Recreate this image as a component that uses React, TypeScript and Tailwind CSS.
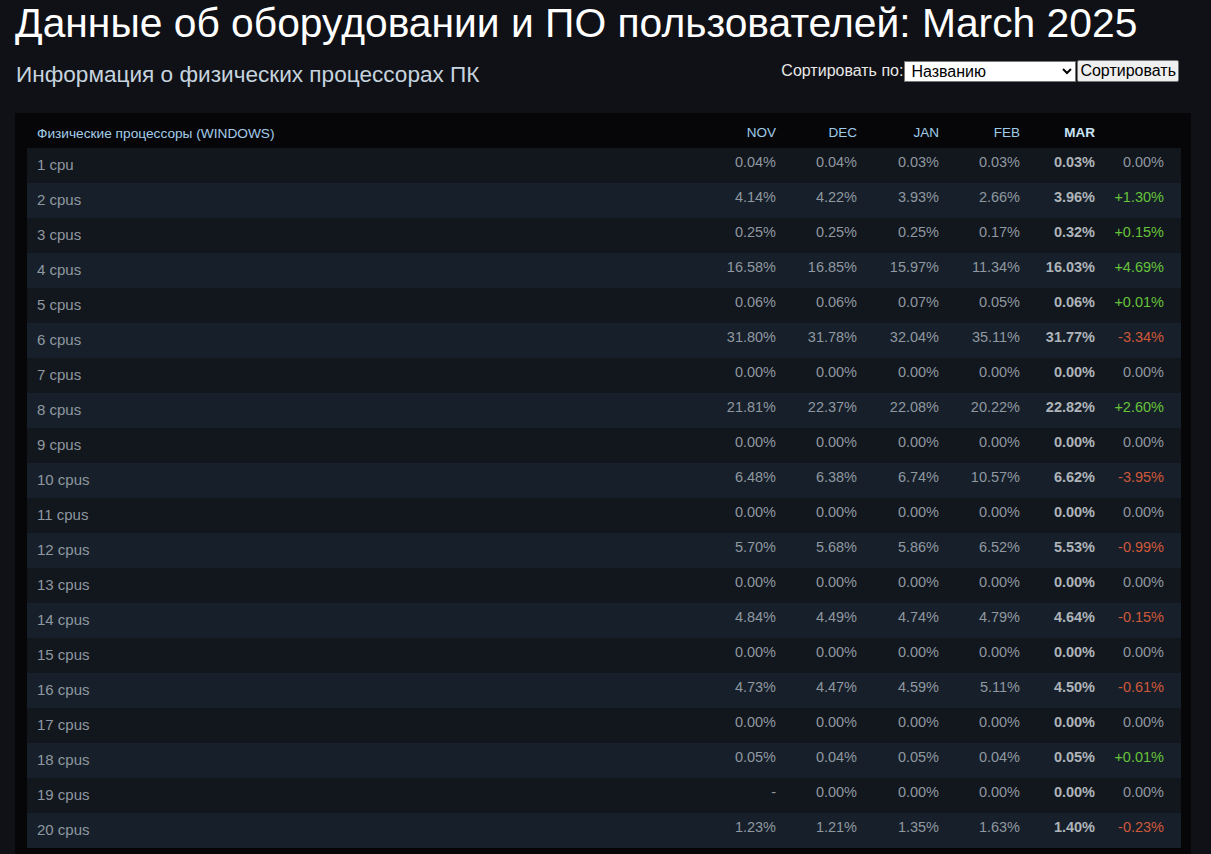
const months = ['NOV', 'DEC', 'JAN', 'FEB', 'MAR'];

// [label, nov, dec, jan, feb, mar, change]
const rows: string[][] = [
  ['1 cpu', '0.04%', '0.04%', '0.03%', '0.03%', '0.03%', '0.00%'],
  ['2 cpus', '4.14%', '4.22%', '3.93%', '2.66%', '3.96%', '+1.30%'],
  ['3 cpus', '0.25%', '0.25%', '0.25%', '0.17%', '0.32%', '+0.15%'],
  ['4 cpus', '16.58%', '16.85%', '15.97%', '11.34%', '16.03%', '+4.69%'],
  ['5 cpus', '0.06%', '0.06%', '0.07%', '0.05%', '0.06%', '+0.01%'],
  ['6 cpus', '31.80%', '31.78%', '32.04%', '35.11%', '31.77%', '-3.34%'],
  ['7 cpus', '0.00%', '0.00%', '0.00%', '0.00%', '0.00%', '0.00%'],
  ['8 cpus', '21.81%', '22.37%', '22.08%', '20.22%', '22.82%', '+2.60%'],
  ['9 cpus', '0.00%', '0.00%', '0.00%', '0.00%', '0.00%', '0.00%'],
  ['10 cpus', '6.48%', '6.38%', '6.74%', '10.57%', '6.62%', '-3.95%'],
  ['11 cpus', '0.00%', '0.00%', '0.00%', '0.00%', '0.00%', '0.00%'],
  ['12 cpus', '5.70%', '5.68%', '5.86%', '6.52%', '5.53%', '-0.99%'],
  ['13 cpus', '0.00%', '0.00%', '0.00%', '0.00%', '0.00%', '0.00%'],
  ['14 cpus', '4.84%', '4.49%', '4.74%', '4.79%', '4.64%', '-0.15%'],
  ['15 cpus', '0.00%', '0.00%', '0.00%', '0.00%', '0.00%', '0.00%'],
  ['16 cpus', '4.73%', '4.47%', '4.59%', '5.11%', '4.50%', '-0.61%'],
  ['17 cpus', '0.00%', '0.00%', '0.00%', '0.00%', '0.00%', '0.00%'],
  ['18 cpus', '0.05%', '0.04%', '0.05%', '0.04%', '0.05%', '+0.01%'],
  ['19 cpus', '-', '0.00%', '0.00%', '0.00%', '0.00%', '0.00%'],
  ['20 cpus', '1.23%', '1.21%', '1.35%', '1.63%', '1.40%', '-0.23%'],
];

const colWidths = ['w-[81px]', 'w-[81px]', 'w-[82px]', 'w-[81px]', 'w-[75px]'];

function changeColor(v: string) {
  if (v.startsWith('+')) return 'text-[#66c33a]';
  if (v.startsWith('-')) return 'text-[#d0583a]';
  return 'text-[#8f98a0]';
}

export default function App() {
  return (
    <div className="min-h-[854px] bg-[#101116] font-['Liberation_Sans',Arial,sans-serif] overflow-hidden">
      {/* Заголовок страницы */}
      <h1 className="pl-[15px] text-[40.8px] leading-[46px] text-white whitespace-nowrap">
        Данные об оборудовании и ПО пользователей: March 2025
      </h1>
      <div className="flex items-start justify-between pl-[16px] pr-[32px] mt-[12px]">
        <h2 className="pt-[3px] text-[22.6px] leading-[28px] text-[#c6d4df]">Информация о физических процессорах ПК</h2>
        <div className="flex items-center pt-[1px] text-[16px] text-[#e8e8e8]">
          <span className="mr-[1px]">Сортировать по:</span>
          <select
            defaultValue="name"
            className="h-[21px] w-[172px] bg-white text-black text-[16px] leading-[18px] border border-[#767676] pl-[2px]"
          >
            <option value="name">Названию</option>
            <option value="share">Доле</option>
          </select>
          <button className="ml-[1px] h-[22px] px-[2px] bg-[#efefef] text-black text-[16px] leading-[18px] border border-[#767676] rounded-[2px]">
            Сортировать
          </button>
        </div>
      </div>

      {/* Таблица */}
      <div className="mt-[24px] ml-[15px] mr-[20px] bg-[#060608] pl-[12px] pr-[10px]">
        <div className="flex items-end h-[35px] pb-[3px]">
          <div className="flex-1 pl-[10px] text-[13.7px] text-[#a4cdea]">Физические процессоры (WINDOWS)</div>
          {months.map((m, i) => (
            <div
              key={m}
              className={`${colWidths[i]} text-right text-[13.5px] pb-[2px] ${
                m === 'MAR' ? 'font-bold text-[#c9e4f7]' : 'text-[#9fcbe8]'
              }`}
            >
              {m}
            </div>
          ))}
          <div className="w-[69px] pr-[17px] box-content" />
        </div>
        {rows.map((r, idx) => (
          <div
            key={r[0]}
            className={`flex items-center h-[35px] text-[14.5px] ${idx % 2 === 0 ? 'bg-[#12161d]' : 'bg-[#17202a]'}`}
          >
            <div className="flex-1 pl-[10px] text-[15px] text-[#8f98a0]">{r[0]}</div>
            {r.slice(1, 6).map((v, i) => (
              <div
                key={i}
                className={`${colWidths[i]} pb-[5px] text-right ${i === 4 ? 'font-bold text-[#aeb4b9]' : 'text-[#8f98a0]'}`}
              >
                {v}
              </div>
            ))}
            <div className={`w-[69px] pr-[17px] pb-[5px] box-content text-right ${changeColor(r[6])}`}>{r[6]}</div>
          </div>
        ))}
        <div className="h-[10px]" />
      </div>
    </div>
  );
}
